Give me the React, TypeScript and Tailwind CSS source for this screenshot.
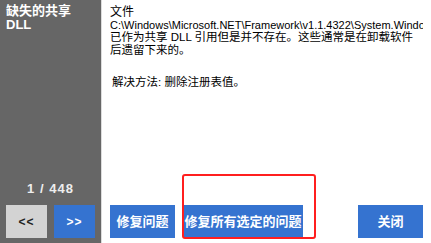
import React from "react";

const font = { fontFamily: '"Liberation Sans", "Noto Sans CJK SC", sans-serif' };

export default function App() {
  return (
    <div
      className="relative flex w-[431px] h-[243px] overflow-hidden bg-white text-black"
      style={font}
    >
      {/* Left panel */}
      <div className="flex flex-col w-[101px] h-full bg-[#666666] px-[6px] pb-[5px]">
        <div className="pt-[4px] text-[13px] leading-[14px] font-bold text-white">
          <div>缺失的共享</div>
          <div>DLL</div>
        </div>
        <div className="flex-1" />
        <div className="text-center text-[13px] leading-[14px] font-bold tracking-[1px] text-[#eeeeee] mb-[9px]">
          1 / 448
        </div>
        <div className="flex gap-[7px]">
          <button className="w-[41px] h-[33px] bg-[#d3d3d3] text-[#222] text-[12px] font-bold tracking-[1px]">
            &lt;&lt;
          </button>
          <button className="w-[41px] h-[33px] bg-[#3573d0] text-white text-[12px] font-bold tracking-[1px]">
            &gt;&gt;
          </button>
        </div>
      </div>
      <div className="w-[1px] h-full bg-[#dcdcdc]" />

      {/* Right panel */}
      <div className="flex flex-col flex-1 min-w-0 pl-[8px] pr-[8px] pb-[5px]">
        <div className="flex-1 min-w-0 overflow-hidden pt-[6px] text-[12px] leading-[12.5px] whitespace-nowrap">
          <div>文件</div>
          <div className="text-[11px] overflow-hidden">
            C:\Windows\Microsoft.NET\Framework\v1.1.4322\System.Windo
          </div>
          <div className="text-[11.5px]">已作为共享 DLL 引用但是并不存在。这些通常是在卸载软件</div>
          <div className="text-[11.5px]">后遗留下来的。</div>
          <div className="mt-[20px] pl-[2px] text-[11.5px]">解决方法: 删除注册表值。</div>
        </div>
        <div className="flex items-end">
          <button className="w-[65px] h-[33px] bg-[#3573d0] text-white text-[13px] font-bold">
            修复问题
          </button>
          <button className="ml-[8px] w-[120px] h-[33px] bg-[#3573d0] text-white text-[13px] font-bold">
            修复所有选定的问题
          </button>
          <button className="ml-auto w-[65px] h-[33px] bg-[#3573d0] text-white text-[13px] font-bold">
            关闭
          </button>
        </div>
      </div>

      {/* Red annotation */}
      <div className="absolute left-[182px] top-[174px] w-[134px] h-[65px] border-2 border-[#ff1f1f] rounded-[3px] pointer-events-none" />
    </div>
  );
}
